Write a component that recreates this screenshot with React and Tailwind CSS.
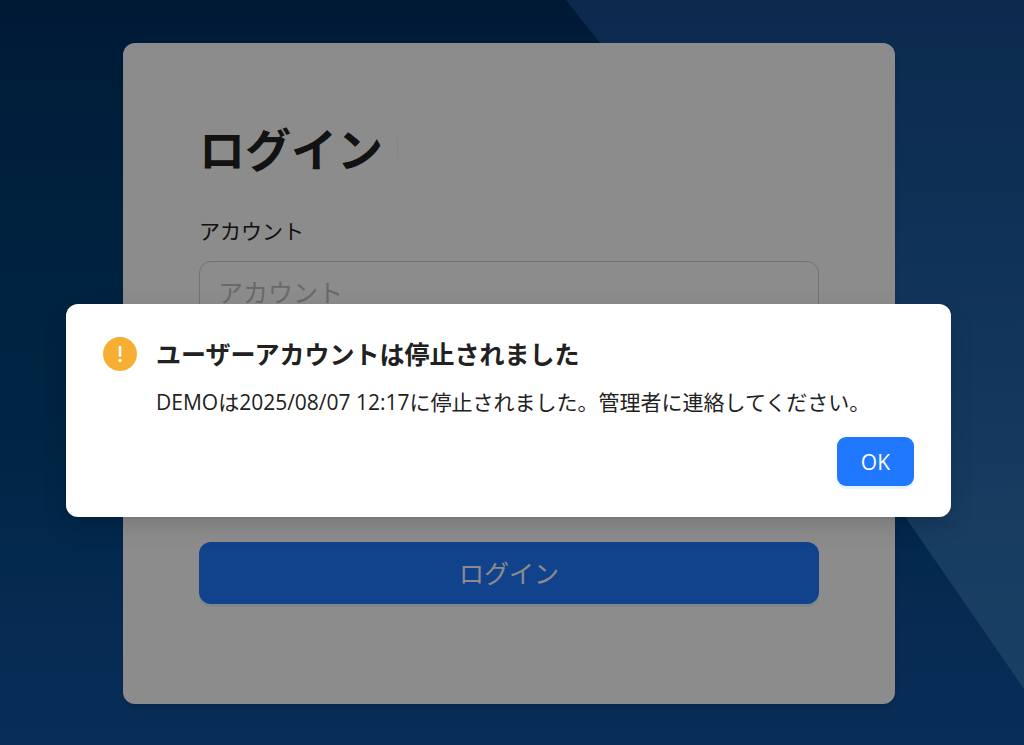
function Backdrop() {
  return (
    <svg
      className="absolute inset-0 h-full w-full"
      viewBox="0 0 1024 745"
      preserveAspectRatio="none"
      aria-hidden="true"
    >
      <defs>
        <linearGradient id="deep" x1="0" y1="0" x2="0" y2="1">
          <stop offset="0" stopColor="#003062" />
          <stop offset="0.3" stopColor="#003e74" />
          <stop offset="0.6" stopColor="#00447e" />
          <stop offset="0.85" stopColor="#0d4f98" />
          <stop offset="1" stopColor="#0f529f" />
        </linearGradient>
        <linearGradient id="bright" x1="0" y1="0" x2="0" y2="1">
          <stop offset="0" stopColor="#164d8e" />
          <stop offset="0.4" stopColor="#1e5da2" />
          <stop offset="0.75" stopColor="#2a6eb0" />
          <stop offset="1" stopColor="#2e74b6" />
        </linearGradient>
      </defs>
      <rect width="1024" height="745" fill="url(#deep)" />
      <path d="M566 0 L601 44 Q760 305 906 518 L1024 689 V0 Z" fill="url(#bright)" />
    </svg>
  );
}

function LoginCard() {
  return (
    <form
      className="w-full max-w-[772px] rounded-xl bg-white px-[76px] pt-[76px] pb-[100px] shadow-md"
      onSubmit={(e) => e.preventDefault()}
    >
      <div className="flex items-start gap-[14px]">
        <h1 className="text-[46px] leading-[60px] font-bold text-[#212121]">ログイン</h1>
        <span className="mt-[18px] h-5 w-px bg-black/5" />
      </div>
      <label htmlFor="account" className="mt-9 block text-[21px] leading-8 text-[#212121]">
        アカウント
      </label>
      <input
        id="account"
        type="text"
        placeholder="アカウント"
        className="mt-[14px] block h-[62px] w-full rounded-xl border border-[#cfcfcf] px-[18px] text-[25px] text-[#212121] placeholder:text-[#bfbfbf]"
      />
      <button
        type="submit"
        className="mt-[219px] block h-[62px] w-full rounded-xl bg-[#2078ff] pt-[2px] text-[25px] text-white shadow-[0_3px_0_rgba(5,145,255,0.1)]"
      >
        ログイン
      </button>
    </form>
  );
}

function WarningIcon() {
  return (
    <svg className="h-[34px] w-[34px] shrink-0" viewBox="0 0 34 34" aria-hidden="true">
      <circle cx="17" cy="17" r="17" fill="#f7ae35" />
      <path d="M15.7 9h2.6v10.6h-2.6z" fill="#fff" />
      <circle cx="17" cy="23.6" r="1.7" fill="#fff" />
    </svg>
  );
}

function SuspendedDialog() {
  return (
    <div
      role="alertdialog"
      aria-modal="true"
      aria-labelledby="dialog-title"
      aria-describedby="dialog-text"
      className="w-full max-w-[885px] rounded-xl bg-white px-[37px] py-[31px] shadow-[0_9px_25px_rgba(0,0,0,0.12),0_5px_9px_-6px_rgba(0,0,0,0.12)]"
    >
      <div className="flex items-start gap-[19px]">
        <div className="flex h-[38px] items-center">
          <WarningIcon />
        </div>
        <div className="min-w-0 flex-1">
          <h2 id="dialog-title" className="text-[25px] leading-[38px] font-bold text-[#212121]">
            ユーザーアカウントは停止されました
          </h2>
          <p id="dialog-text" className="mt-3 text-[21px] leading-[34px] text-[#212121]">
            DEMOは2025/08/07 12:17に停止されました。管理者に連絡してください。
          </p>
        </div>
      </div>
      <div className="mt-[18px] flex justify-end">
        <button
          type="button"
          className="h-[49px] rounded-[9px] bg-[#2078ff] px-6 pt-[2px] text-[21px] text-white shadow-[0_3px_0_rgba(5,145,255,0.1)]"
        >
          OK
        </button>
      </div>
    </div>
  );
}

export default function App() {
  return (
    <main
      lang="ja"
      className="relative flex min-h-screen items-start justify-center bg-[#003c74] pt-[43px] pr-[6px] font-['Open_Sans','Noto_Sans_CJK_JP',sans-serif]"
    >
      <Backdrop />
      <div className="relative flex w-full justify-center">
        <LoginCard />
      </div>
      <div className="absolute inset-0 flex items-start justify-center bg-black/45 pt-[304px] pr-[7px]">
        <SuspendedDialog />
      </div>
    </main>
  );
}
